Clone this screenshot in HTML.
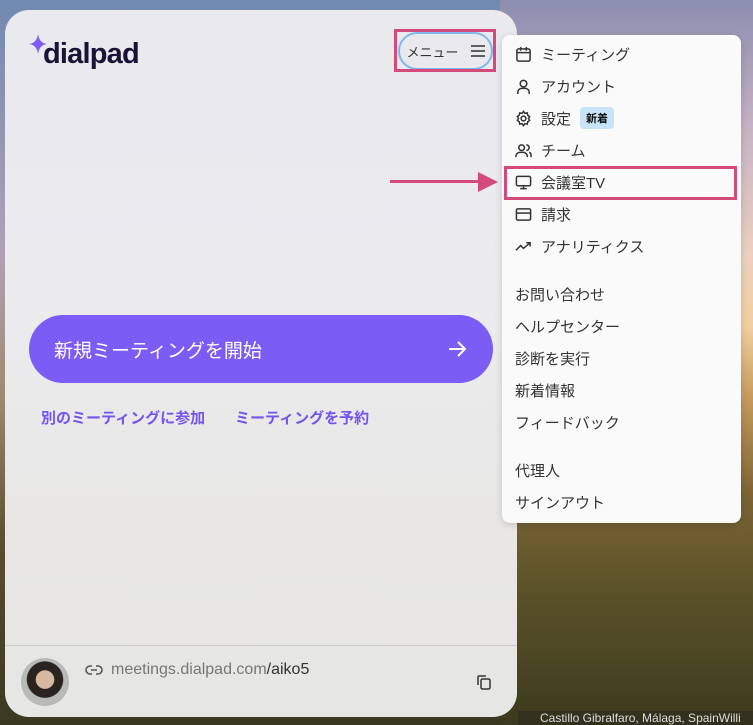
<!DOCTYPE html>
<html><head><meta charset="utf-8"><style>
*{margin:0;padding:0;box-sizing:border-box}
body{width:753px;height:725px;overflow:hidden;position:relative;font-family:"Liberation Sans","Noto Sans CJK JP",sans-serif;
background:linear-gradient(180deg,#6f8ab0 0%,#8e93b3 15%,#b0a2b5 35%,#9a8a70 55%,#5a4e30 75%,#3a3820 100%);}
.bgr{position:absolute;left:500px;top:0;width:253px;height:725px;background:linear-gradient(180deg,#8c8eb0 0%,#c8b3c4 18%,#ecd0c0 35%,#f2cf9e 45%,#c59a5c 55%,#7c6535 68%,#5a5128 82%,#3c3a1e 100%)}
.panel{position:absolute;left:5px;top:10px;width:512px;height:707px;border-radius:24px;background:linear-gradient(180deg,#e9e9ee 0%,#ececef 40%,#e8e7e6 70%,#e6e6e4 100%);overflow:hidden}
.logo{position:absolute;left:43px;top:38px;font-size:29px;color:#1b1238;letter-spacing:-0.8px;font-weight:bold}
.star{position:absolute;left:29px;top:34px;width:18px;height:20px}
.menubtn{position:absolute;left:398px;top:32px;width:95px;height:38px;border:2px solid #7fb7f0;border-radius:19px;font-size:13px;color:#333;display:flex;align-items:center;justify-content:center;gap:12px}
.btnbox{position:absolute;left:394px;top:29px;width:102px;height:43px;border:3px solid #d44a7a}
.start{position:absolute;left:29px;top:315px;width:464px;height:68px;border-radius:34px;background:#7b5cf5;color:#fff;font-size:19px;display:flex;align-items:center;padding-left:25px}
.links{position:absolute;top:407px;font-size:15px;color:#7454f0;font-weight:bold}
.foot{position:absolute;left:5px;top:645px;width:512px;border-top:1px solid #ccc}
.av{position:absolute;left:21px;top:658px;width:48px;height:48px;border-radius:50%;background:radial-gradient(circle at 50% 45%,#d9b8a0 0 25%,#2a2420 27% 50%,#b8bab6 52%)}
.url{position:absolute;left:111px;top:661px;font-size:16px;color:#777}
.menu{position:absolute;left:502px;top:35px;width:239px;height:488px;background:#fafafa;border-radius:8px;box-shadow:0 2px 8px rgba(0,0,0,.15)}
.it{position:absolute;left:13px;height:24px;font-size:15px;color:#333;display:flex;align-items:center;gap:9px}
.it svg{width:17px;height:17px;fill:none;stroke:#333;stroke-width:1.6}
.badge{background:#c7e4fb;color:#111;font-size:11px;font-weight:bold;padding:3px 6px;border-radius:4px}
.hl{position:absolute;left:504px;top:166px;width:233px;height:34px;border:3px solid #d44a7a}
.arrow{position:absolute;left:390px;top:180px;width:90px;height:3px;background:#d44a7a}
.arrowh{position:absolute;left:478px;top:172px;width:0;height:0;border-left:20px solid #d44a7a;border-top:10px solid transparent;border-bottom:10px solid transparent}
.cap{position:absolute;left:518px;top:711px;width:235px;height:14px;background:rgba(40,40,30,.5);color:#ddd;font-size:12px;padding-left:22px;line-height:14px}
</style></head><body>
<div class="bgr"></div>
<div class="panel"></div>
<svg class="star" viewBox="0 0 16 18"><path d="M8 0 Q9 8 16 9 Q9 10 8 18 Q7 10 0 9 Q7 8 8 0Z" fill="#7b5cf5"/></svg>
<div class="logo">dialpad</div>
<div class="menubtn">メニュー <svg width="14" height="12" viewBox="0 0 14 12" stroke="#333" stroke-width="1.6"><path d="M0 1h14M0 6h14M0 11h14"/></svg></div>
<div class="btnbox"></div>
<div class="start">新規ミーティングを開始<svg style="position:absolute;right:26px;top:24px" width="20" height="20" viewBox="0 0 20 20" fill="none" stroke="#fff" stroke-width="2"><path d="M2 10h16M11 3l7 7-7 7"/></svg></div>
<div class="links" style="left:41px">別のミーティングに参加</div>
<div class="links" style="left:235px">ミーティングを予約</div>
<div class="foot"></div>
<div class="av"></div>
<svg style="position:absolute;left:85px;top:661px" width="18" height="18" viewBox="0 0 18 18" fill="none" stroke="#555" stroke-width="1.6"><path d="M7 5H5a4 4 0 000 8h2M11 5h2a4 4 0 010 8h-2M6 9h6"/></svg>
<div class="url">meetings.dialpad.com<span style="color:#333">/aiko5</span></div>
<svg style="position:absolute;left:475px;top:673px" width="18" height="18" viewBox="0 0 18 18" fill="none" stroke="#333" stroke-width="1.5"><rect x="6" y="6" width="9" height="10" rx="1.5"/><path d="M3 12V4a1 1 0 011-1h7"/></svg>
<div class="menu">
<div class="it" style="top:7px"><svg viewBox="0 0 18 18"><rect x="2" y="3" width="14" height="13" rx="2"/><path d="M2 7h14M6 1v4M12 1v4"/></svg>ミーティング</div>
<div class="it" style="top:39px"><svg viewBox="0 0 18 18"><circle cx="9" cy="6" r="3.5"/><path d="M3 17v-2a4 4 0 014-4h4a4 4 0 014 4v2"/></svg>アカウント</div>
<div class="it" style="top:71px"><svg viewBox="0 0 18 18"><circle cx="9" cy="9" r="2.5"/><path d="M9 1.5l1.5 2 2.5-.5.5 2.5 2 1.5-1.2 2 1.2 2-2 1.5-.5 2.5-2.5-.5L9 16.5l-1.5-2-2.5.5-.5-2.5-2-1.5 1.2-2-1.2-2 2-1.5.5-2.5 2.5.5z"/></svg>設定 <span class="badge">新着</span></div>
<div class="it" style="top:103px"><svg viewBox="0 0 18 18"><circle cx="7" cy="6" r="3"/><path d="M1 16v-1a4 4 0 014-4h4a4 4 0 014 4v1M12 3a3 3 0 010 6M15 11a3 3 0 012 3v2"/></svg>チーム</div>
<div class="it" style="top:135px"><svg viewBox="0 0 18 18"><rect x="1.5" y="2.5" width="15" height="10" rx="1.5"/><path d="M9 12.5v3M5.5 15.5h7"/></svg>会議室TV</div>
<div class="it" style="top:167px"><svg viewBox="0 0 18 18"><rect x="1.5" y="3" width="15" height="12" rx="1.5"/><path d="M1.5 7.5h15"/></svg>請求</div>
<div class="it" style="top:199px"><svg viewBox="0 0 18 18"><path d="M1 13l5-5 3 3 7-6M12 5h4v4"/></svg>アナリティクス</div>
<div class="it" style="top:247px">お問い合わせ</div>
<div class="it" style="top:279px">ヘルプセンター</div>
<div class="it" style="top:311px">診断を実行</div>
<div class="it" style="top:343px">新着情報</div>
<div class="it" style="top:375px">フィードバック</div>
<div class="it" style="top:423px">代理人</div>
<div class="it" style="top:455px">サインアウト</div>
</div>
<div class="hl"></div>
<div class="arrow"></div><div class="arrowh"></div>
<div class="cap">Castillo Gibralfaro, Málaga, SpainWilli</div>
</body></html>
